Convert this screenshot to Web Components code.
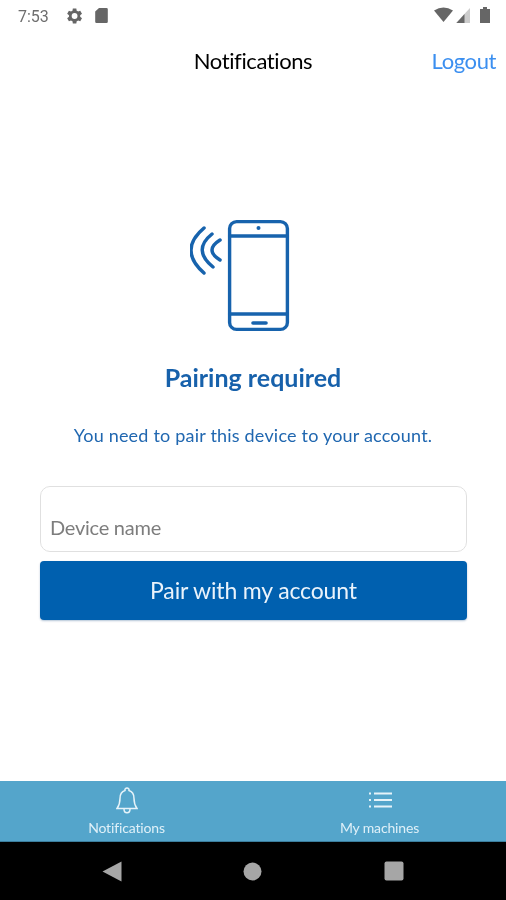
<!DOCTYPE html>
<html lang="en">
<head>
<meta charset="utf-8">
<title>Notifications</title>
<style>
  html, body { margin: 0; height: 100%; background: #fff; font-family: Lato, "Liberation Sans", sans-serif; }
</style>
</head>
<body>
<pairing-app></pairing-app>
<script>
class StatusBar extends HTMLElement {
  constructor() {
    super();
    this.attachShadow({ mode: 'open' }).innerHTML = `
      <style>
        :host { display: flex; align-items: center; height: 32px; padding: 0 16px 0 18px; box-sizing: border-box; color: #6e6e6e; font: 16px Roboto, sans-serif; }
        .left { display: flex; align-items: center; gap: 15px; }
        .right { margin-left: auto; display: flex; align-items: center; gap: 3px; }
        svg { display: block; fill: #666; }
      </style>
      <div class="left">
        <span>7:53</span>
        <svg width="20" height="20" viewBox="0 0 24 24"><path d="M19.400 13a7.500 7.500 0 0 0 0-2l2.200-1.700-2.100-3.600-2.600 1a7.500 7.500 0 0 0-1.700-1L14.800 3h-4.200l-.4 2.700a7.500 7.500 0 0 0-1.700 1l-2.600-1-2.100 3.600L6 11a7.500 7.500 0 0 0 0 2l-2.200 1.700 2.100 3.600 2.600-1a7.500 7.500 0 0 0 1.700 1l.4 2.700h4.200l.4-2.700a7.500 7.500 0 0 0 1.700-1l2.600 1 2.100-3.600zM12.700 15.500a3.500 3.500 0 1 1 0-7 3.500 3.500 0 0 1 0 7z"/></svg>
        <svg width="13" height="16" viewBox="0 0 13 16" style="margin-left:-4px"><path d="M4 0H11.500a1.300 1.300 0 0 1 1.300 1.300V13.700a1.300 1.300 0 0 1-1.300 1.300H1.500A1.300 1.300 0 0 1 .2 13.700V3.500z"/></svg>
      </div>
      <div class="right">
        <svg width="19" height="16" viewBox="0 0 19 16" style="margin-bottom:2px"><path d="M0 3.500Q9.500-2.500 19 3.500L9.500 15z"/></svg>
        <svg width="14" height="16" viewBox="0 0 14 16"><path d="M14 0V15H0z" fill="#ccc"/><path d="M8.500 6V15H0.500z"/></svg>
        <svg width="10" height="16" viewBox="0 0 10 16" style="margin:0 0 2px 7px"><path d="M3 0H7V2H10V16H0V2H3z"/></svg>
      </div>`;
  }
}

class AppHeader extends HTMLElement {
  constructor() {
    super();
    this.attachShadow({ mode: 'open' }).innerHTML = `
      <style>
        :host { display: grid; grid-template-columns: 1fr auto 1fr; align-items: center; height: 58px; padding-bottom: 2px; box-sizing: border-box; color: #000; font-size: 22px; letter-spacing: -0.4px; }
        .title { grid-column: 2; }
        .action { justify-self: end; padding-right: 10px; color: #3b8ff0; }
      </style>
      <div class="title"><slot name="title"></slot></div>
      <div class="action"><slot name="action"></slot></div>`;
  }
}

class PairingPanel extends HTMLElement {
  constructor() {
    super();
    this.attachShadow({ mode: 'open' }).innerHTML = `
      <style>
        :host { display: flex; flex-direction: column; align-items: center; flex: 1; padding-top: 128px; color: #2067b0; box-sizing: border-box; }
        svg { display: block; fill: none; stroke: #1763ad; stroke-width: 3.400; stroke-linecap: round; }
        h1 { margin: 27px 0 0; font-size: 25px; line-height: 36px; font-weight: 700; color: #1761ab; }
        p { margin: 28px 0 0; font-size: 18px; line-height: 24px; letter-spacing: 0.2px; }
        .form { width: 427px; margin: 39px 0 0 1px; display: flex; flex-direction: column; gap: 9px; }
      </style>
      <svg width="126" height="114" viewBox="0 0 126 114">
        <rect x="39.600" y="3.600" width="57.800" height="107.800" rx="7"/>
        <path d="M39.600 18H97.400M39.600 96H97.400"/>
        <path d="M63 105H76" stroke-width="3.600"/>
        <circle cx="68.500" cy="10" r="2" fill="#1763ad" stroke="none"/>
        <path d="M30 22Q14 32 30 42M22 16Q2 32 23 49M14 10Q-12 32 14 55" stroke-width="3.500"/>
      </svg>
      <h1>Pairing required</h1>
      <p>You need to pair this device to your account.</p>
      <div class="form"><slot></slot></div>`;
  }
}

class TextField extends HTMLElement {
  constructor() {
    super();
    this.attachShadow({ mode: 'open' }).innerHTML = `
      <style>
        :host { display: flex; align-items: flex-end; height: 66px; box-sizing: border-box; padding: 0 9px 10px; border: 1px solid #e0e0e0; border-radius: 10px; color: #7d7d7d; font-size: 20px; line-height: 28px; letter-spacing: -0.25px; }
      </style>
      <slot></slot>`;
  }
}

class PrimaryButton extends HTMLElement {
  constructor() {
    super();
    this.attachShadow({ mode: 'open' }).innerHTML = `
      <style>
        :host { display: flex; align-items: center; justify-content: center; height: 59px; padding-bottom: 2px; box-sizing: border-box; border-radius: 4px; background: #0060af; color: #eaf3fb; font-size: 23px; letter-spacing: -0.15px; box-shadow: 0 1px 2px rgba(0,60,120,.3); }
      </style>
      <slot></slot>`;
  }
}

class TabBar extends HTMLElement {
  constructor() {
    super();
    this.attachShadow({ mode: 'open' }).innerHTML = `
      <style>
        :host { display: grid; grid-template-columns: 1fr 1fr; height: 61px; background: #54a5cb; border-bottom: 1px solid #3c7f9e; box-sizing: border-box; }
      </style>
      <slot></slot>`;
  }
}

class TabItem extends HTMLElement {
  constructor() {
    super();
    this.attachShadow({ mode: 'open' }).innerHTML = `
      <style>
        :host { display: flex; flex-direction: column; align-items: center; justify-content: flex-end; padding-bottom: 5px; color: #dff0f8; font-size: 14px; line-height: 17px; letter-spacing: -0.15px; gap: 2px; }
        ::slotted(svg) { display: block; fill: none; stroke: #e6f3f9; stroke-width: 1.500; }
      </style>
      <slot name="icon"></slot>
      <slot></slot>`;
  }
}

class NavBar extends HTMLElement {
  constructor() {
    super();
    this.attachShadow({ mode: 'open' }).innerHTML = `
      <style>
        :host { display: grid; grid-template-columns: 21px 21px 21px; justify-content: space-between; align-items: center; justify-items: center; height: 58px; padding: 0 102px 0 101px; background: #000; }
        svg { display: block; fill: #a6a6a6; }
      </style>
      <svg width="20" height="21" viewBox="0 0 20 21"><path d="M19.500 0.500V20.500L0.500 10.500z"/></svg>
      <svg width="19" height="19" viewBox="0 0 19 19"><circle cx="9.500" cy="9.500" r="9"/></svg>
      <svg width="20" height="20" viewBox="0 0 20 20"><rect x="0.500" y="0.500" width="19" height="19" rx="2"/></svg>`;
  }
}

class PairingApp extends HTMLElement {
  constructor() {
    super();
    this.attachShadow({ mode: 'open' }).innerHTML = `
      <style>
        :host { display: flex; flex-direction: column; height: 100vh; font-family: Lato, "Liberation Sans", sans-serif; filter: blur(0.4px); }
        span, text-field, primary-button { display: flex; }
      </style>
      <status-bar></status-bar>
      <app-header>
        <span slot="title">Notifications</span>
        <span slot="action">Logout</span>
      </app-header>
      <pairing-panel>
        <text-field>Device name</text-field>
        <primary-button>Pair with my account</primary-button>
      </pairing-panel>
      <tab-bar>
        <tab-item>
          <svg slot="icon" width="22" height="30" viewBox="0 0 22 30"><path d="M11 1a2 2 0 0 1 2 2.500c3.500 1 5 4 5 8 0 4 .8 7 3 10H1c2.200-3 3-6 3-10 0-4 1.500-7 5-8a2 2 0 0 1 2-2.500zM8 22c0 5 6 5 6 0"/></svg>
          Notifications
        </tab-item>
        <tab-item>
          <svg slot="icon" width="24" height="30" viewBox="0 0 24 30" style="stroke-width:2"><path d="M6 6.500H24M6 13H24M6 19.500H24M1 6.500H3M1 13H3M1 19.500H3"/></svg>
          My machines
        </tab-item>
      </tab-bar>
      <nav-bar></nav-bar>`;
  }
}

customElements.define('status-bar', StatusBar);
customElements.define('app-header', AppHeader);
customElements.define('pairing-panel', PairingPanel);
customElements.define('text-field', TextField);
customElements.define('primary-button', PrimaryButton);
customElements.define('tab-bar', TabBar);
customElements.define('tab-item', TabItem);
customElements.define('nav-bar', NavBar);
customElements.define('pairing-app', PairingApp);
</script>
</body>
</html>
